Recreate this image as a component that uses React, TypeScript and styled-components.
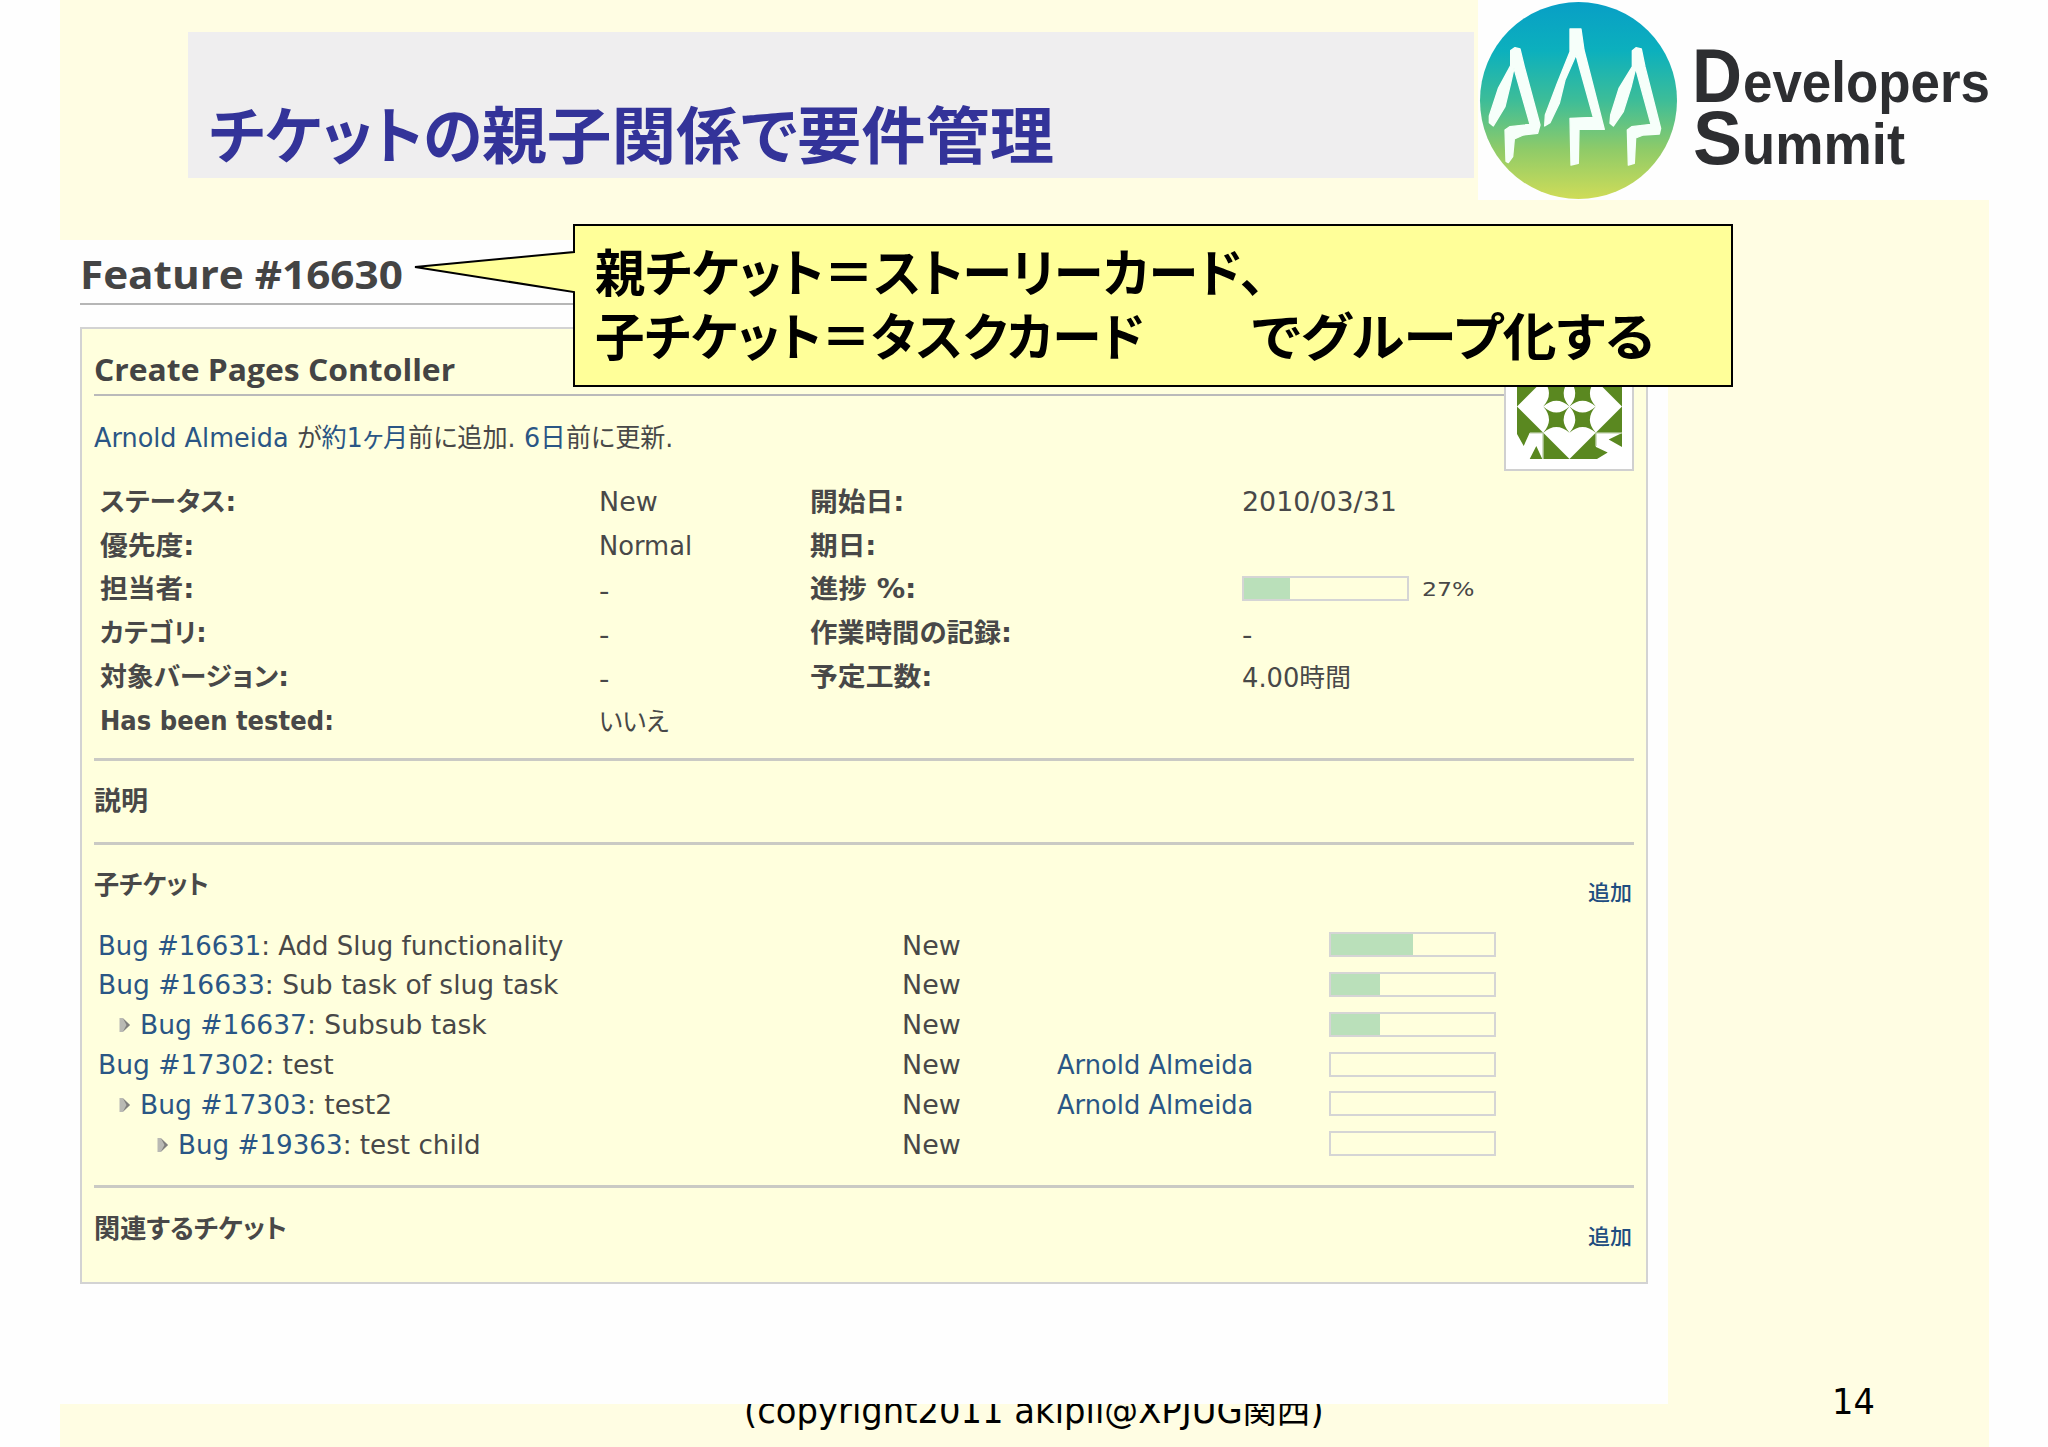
import React, { useLayoutEffect, useRef, useState } from "react";
import styled, { createGlobalStyle } from "styled-components";

const verdana = `"DejaVu Sans", "Noto Sans CJK JP", sans-serif`;
const gothic = `"Noto Sans CJK JP", sans-serif`;
const trebuchet = `"Open Sans", "Noto Sans CJK JP", sans-serif`;

const Global = createGlobalStyle`
  * { box-sizing: border-box; }
  html, body { margin: 0; background: #fefefe; }
  body { font-family: ${verdana}; font-size: 26px; color: #484848; }
`;

/* ---------- text set to a given measure ---------- */

const FitBox = styled.span<{ $w: number }>`
  display: inline-block;
  width: ${(p) => p.$w}px;
  white-space: pre;
  flex: none;
`;
const FitInner = styled.span`
  display: inline-block;
  transform-origin: 0 50%;
  font-feature-settings: "palt";
`;

function Fit({ w, children }: { w: number; children: React.ReactNode }) {
  const ref = useRef<HTMLSpanElement>(null);
  const [scale, setScale] = useState(1);
  useLayoutEffect(() => {
    if (ref.current) setScale(w / ref.current.offsetWidth);
  }, [w]);
  return (
    <FitBox $w={w}>
      <FitInner ref={ref} style={{ transform: `scaleX(${scale})` }}>
        {children}
      </FitInner>
    </FitBox>
  );
}

/* ---------- slide ---------- */

const Page = styled.main`
  position: relative;
  width: 2048px;
  height: 1447px;
  overflow: hidden;
  padding-left: 60px;
  background: #fefefe;
`;
const Slide = styled.div`
  width: 1929px;
  height: 1447px;
  background: #fffde3;
  display: flex;
  flex-direction: column;
`;
const Header = styled.header`
  height: 240px;
  padding: 32px 0 0 128px;
  display: flex;
  flex: none;
`;
const TitleBar = styled.h1`
  margin: 0;
  width: 1286px;
  height: 146px;
  padding: 62px 0 0 21px;
  background: #efeeef;
  color: #333399;
  font: 700 62px/76px ${gothic};
`;
const LogoBox = styled.div`
  position: absolute;
  left: 1478px;
  top: 0;
  width: 570px;
  height: 200px;
  background: #fefefe;
`;
const Middle = styled.div`
  display: flex;
  height: 1164px;
  flex: none;
`;
const Aside = styled.aside`
  flex: 1;
  display: flex;
  align-items: flex-end;
`;
const PageNumber = styled.div`
  margin: 0 0 -18px 164px;
  color: #000;
  font: 36px/40px ${verdana};
`;
const Footer = styled.footer`
  height: 43px;
  overflow: hidden;
  padding-left: 684px;
  color: #000;
`;
const Copyright = styled.div`
  margin-top: -15px;
  font: 35px/44px ${verdana};
`;

/* ---------- issue sheet ---------- */

const Sheet = styled.section`
  width: 1608px;
  background: #fefefe;
  padding: 0 20px;
`;
const IssueHeading = styled.h2`
  margin: 0 0 22px;
  height: 65px;
  padding-top: 4px;
  border-bottom: 2px solid #b6b6b6;
  font: 700 40px/59px ${trebuchet};
  color: #444;
`;
const Issue = styled.article`
  height: 957px;
  border: 2px solid #d3d3d3;
  padding: 0 12px;
  background: #ffffdd;
`;
const IssueTop = styled.div`
  height: 151px;
  padding-top: 12px;
  display: flex;
`;
const IssueSummary = styled.div`
  flex: 1;
`;
const Subject = styled.h3`
  margin: 0;
  height: 55px;
  padding-top: 4px;
  border-bottom: 2px solid #bababa;
  font: 700 30px/49px ${trebuchet};
  color: #444;
`;
const Byline = styled.p`
  margin: 24px 0 0;
  line-height: 36px;
`;
const Link = styled.a`
  color: #2a5685;
`;
const AvatarFrame = styled.div`
  width: 130px;
  height: 130px;
  border: 2px solid #d0d0d0;
  background: #fff;
  display: grid;
  place-items: center;
`;
const Attributes = styled.dl`
  margin: 0;
  padding-left: 6px;
  display: grid;
  grid-template-columns: 499px 211px 432px auto;
  grid-auto-rows: 43.8px;
  align-items: center;
  line-height: 36px;
`;
const Label = styled.dt`
  font-weight: 700;
`;
const Value = styled.dd<{ $drop?: number }>`
  margin: 0;
  padding-top: ${(p) => p.$drop ?? 0}px;
  display: flex;
  align-items: center;
`;
const Percent = styled.span`
  margin-left: 13px;
  font-size: 20px;
`;
const Rule = styled.hr<{ $top: number }>`
  margin: ${(p) => p.$top}px 0 0;
  border: 0;
  height: 3px;
  background: #cacac4;
`;
const SectionTitle = styled.h4<{ $h: number }>`
  margin: 0;
  height: ${(p) => p.$h}px;
  display: flex;
  align-items: center;
  justify-content: space-between;
  font: 700 26px/36px ${verdana};
`;
const AddLink = styled(Link)`
  padding: 15px 2px 0 0;
  font-weight: 500;
  font-size: 21px;
  color: #1f4d80;
`;
const Subtask = styled.div`
  height: 39.8px;
  display: grid;
  grid-template-columns: 808px 155px 272px auto;
  align-items: center;
  line-height: 36px;
`;
const TaskName = styled.div<{ $indent: number }>`
  display: flex;
  align-items: center;
  padding-left: ${(p) => p.$indent}px;
`;
const ArrowIcon = styled.svg`
  width: 12px;
  height: 16px;
  margin-right: 9px;
`;
const Track = styled.div`
  width: 167px;
  height: 25px;
  border: 2px solid #d5d5d5;
  display: flex;
  position: relative;
  top: -1px;
`;
const Fill = styled.div`
  background: #bae0ba;
`;

/* ---------- callout ---------- */

const Callout = styled.div`
  position: absolute;
  left: 413px;
  top: 223px;
  width: 1322px;
  height: 166px;
  padding: 15px 0 0 182px;
  color: #000;
  font: 700 51px/64px ${gothic};
`;
const CalloutShape = styled.svg`
  position: absolute;
  inset: 0;
`;
const CalloutLine = styled.div`
  position: relative;
  height: 64px;
`;

function Progress({ value }: { value: number }) {
  return (
    <Track>
      <Fill style={{ width: `${value}%` }} />
    </Track>
  );
}

function Logo() {
  return (
    <LogoBox>
      <svg width="570" height="200" viewBox="0 0 570 200">
        <defs>
          <linearGradient id="sky" x1="0" y1="0" x2="0" y2="1">
            <stop offset="0" stopColor="#089fc6" />
            <stop offset="0.25" stopColor="#0cb0bd" />
            <stop offset="0.5" stopColor="#3dbd98" />
            <stop offset="0.75" stopColor="#8fcb68" />
            <stop offset="1" stopColor="#cfdc58" />
          </linearGradient>
        </defs>
        <ellipse cx="100.5" cy="100.5" rx="98.5" ry="98.5" fill="url(#sky)" />
        <g
          transform="translate(-8 0) scale(0.33333)"
          fill="#f6fffa"
          stroke="#f6fffa"
          strokeWidth="4"
          strokeLinejoin="round"
        >
          <path d="M122 152 L135 143 L150 147 L163 200 L210 375 L203 400 L160 405 L133 417 L128 470 L115 488 L108 484 L105 390 L120 380 L180 373 L132 205 L122 250 L105 320 L70 378 L58 368 L58 348 L85 265 L122 197Z" />
          <path d="M300 87 L333 87 L342 150 L403 388 L327 388 L325 490 L303 495 L300 355 L370 352 L318 165 L285 240 L268 310 L240 368 L224 378 L226 345 L262 250 L300 155Z" />
          <path d="M487 152 L498 143 L514 147 L525 200 L572 385 L568 402 L520 405 L497 414 L493 490 L475 495 L472 390 L485 380 L543 373 L497 205 L483 262 L460 335 L430 378 L420 370 L422 345 L447 265 L487 200Z" />
        </g>
        <g fill="#2d2e31" fontFamily="Liberation Sans, sans-serif" fontWeight="700">
          <text x="214" y="102" fontSize="76" textLength="50" lengthAdjust="spacingAndGlyphs">D</text>
          <text x="265" y="102" fontSize="58" textLength="247" lengthAdjust="spacingAndGlyphs">evelopers</text>
          <text x="215" y="164" fontSize="76" textLength="49" lengthAdjust="spacingAndGlyphs">S</text>
          <text x="264" y="164" fontSize="58" textLength="163" lengthAdjust="spacingAndGlyphs">ummit</text>
        </g>
      </svg>
    </LogoBox>
  );
}

function Avatar() {
  const star = "M0 0 Q13.1 12 26.25 0 Q14.5 13.1 26.25 26.25 Q13.1 14.5 0 26.25 Q11.5 13.1 0 0Z";
  return (
    <AvatarFrame>
      <svg width="105" height="105" viewBox="0 0 105 105" fill="#5a8820">
        {[26.25, 52.5].map((x) =>
          [26.25, 52.5].map((y) => <path key={`${x}-${y}`} d={star} transform={`translate(${x} ${y})`} />)
        )}
        <path d="M0 26.25 H26.25 L0 52.5Z M0 52.5 L26.25 78.75 H0Z M105 26.25 H78.75 L105 52.5Z M105 52.5 L78.75 78.75 H105Z" />
        <path d="M26.25 78.75 V105 H52.5Z M78.75 78.75 V105 H52.5Z M26.25 26.25 V0 H52.5Z M78.75 26.25 V0 H52.5Z" />
        <path d="M0 78 H13 L6.7 92 L0 80Z M12.7 105 L19.3 92 L25.3 105Z M105 79 V93 L91.7 85.5Z M78 92.5 L90.7 98.5 L80 105 H78Z" />
        <path d="M13 79 H26 V105 M79 92 V79 H105" fill="none" stroke="#b5caa0" strokeWidth="1.2" />
      </svg>
    </AvatarFrame>
  );
}

function Arrow() {
  return (
    <ArrowIcon viewBox="0 0 12 16">
      <path d="M0.5 1 L4 1 L11 8 L4 15 L0.5 15Z" fill="#b9b9b4" />
      <path d="M4 1.5 L11 8 L4 14.5 L7.5 8Z" fill="#807f7c" />
    </ArrowIcon>
  );
}

type Cell = { text: string; w: number; drop?: number } | null;
const none: Cell = { text: "-", w: 10, drop: 3 };
const attributes: [Cell, Cell | "progress", Cell, Cell | "progress"][] = [
  [{ text: "ステータス:", w: 136 }, { text: "New", w: 59 }, { text: "開始日:", w: 94 }, { text: "2010/03/31", w: 155 }],
  [{ text: "優先度:", w: 94 }, { text: "Normal", w: 93 }, { text: "期日:", w: 66 }, null],
  [{ text: "担当者:", w: 94 }, none, { text: "進捗 %:", w: 107 }, "progress"],
  [{ text: "カテゴリ:", w: 107 }, none, { text: "作業時間の記録:", w: 202 }, none],
  [{ text: "対象バージョン:", w: 189 }, none, { text: "予定工数:", w: 122 }, { text: "4.00時間", w: 109, drop: 2 }],
  [{ text: "Has been tested:", w: 234 }, { text: "いいえ", w: 70, drop: 3 }, null, null],
];

const subtasks = [
  { indent: 0, id: "Bug #16631", title: "Add Slug functionality", w: 465, done: 50 },
  { indent: 0, id: "Bug #16633", title: "Sub task of slug task", w: 460, done: 30 },
  { indent: 1, id: "Bug #16637", title: "Subsub task", w: 347, done: 30 },
  { indent: 0, id: "Bug #17302", title: "test", w: 236, who: true, done: 0 },
  { indent: 1, id: "Bug #17303", title: "test2", w: 252, who: true, done: 0 },
  { indent: 2, id: "Bug #19363", title: "test child", w: 303, done: 0 },
];

function AttributeValue({ cell }: { cell: Cell | "progress" }) {
  if (cell === "progress")
    return (
      <Value>
        <Progress value={28} />
        <Percent>
          <Fit w={52}>27%</Fit>
        </Percent>
      </Value>
    );
  return <Value $drop={cell?.drop}>{cell && <Fit w={cell.w}>{cell.text}</Fit>}</Value>;
}

export default function App() {
  return (
    <Page>
      <Global />
      <Slide>
        <Header>
          <TitleBar>
            <Fit w={273}>チケットの</Fit>
            <Fit w={259}>親子関係</Fit>
            <Fit w={56}>で</Fit>
            <Fit w={257}>要件管理</Fit>
          </TitleBar>
        </Header>
        <Middle>
          <Sheet>
            <IssueHeading>
              <Fit w={323}>Feature #16630</Fit>
            </IssueHeading>
            <Issue>
              <IssueTop>
                <IssueSummary>
                  <Subject>
                    <Fit w={361}>Create Pages Contoller</Fit>
                  </Subject>
                  <Byline>
                    <Fit w={203}>
                      <Link>Arnold Almeida</Link>{" "}
                    </Fit>
                    <Fit w={111}>
                      が<Link>約1ヶ月</Link>
                    </Fit>
                    <Fit w={116}>前に追加. </Fit>
                    <Fit w={42}>
                      <Link>6日</Link>
                    </Fit>
                    <Fit w={107}>前に更新.</Fit>
                  </Byline>
                </IssueSummary>
                <Avatar />
              </IssueTop>
              <Attributes>
                {attributes.map(([l1, v1, l2, v2], i) => (
                  <React.Fragment key={i}>
                    <Label>{l1 && <Fit w={l1.w}>{l1.text}</Fit>}</Label>
                    <AttributeValue cell={v1} />
                    <Label>{l2 && <Fit w={l2.w}>{l2.text}</Fit>}</Label>
                    <AttributeValue cell={v2} />
                  </React.Fragment>
                ))}
              </Attributes>
              <Rule $top={15} />
              <SectionTitle $h={81}>
                <Fit w={54}>説明</Fit>
              </SectionTitle>
              <Rule $top={0} />
              <SectionTitle $h={81}>
                <Fit w={115}>子チケット</Fit>
                <AddLink>
                  <Fit w={44}>追加</Fit>
                </AddLink>
              </SectionTitle>
              {subtasks.map((t) => (
                <Subtask key={t.id}>
                  <TaskName $indent={t.indent ? 25 + (t.indent - 1) * 38 : 4}>
                    {t.indent > 0 && <Arrow />}
                    <Fit w={t.w}>
                      <Link>{t.id}</Link>: {t.title}
                    </Fit>
                  </TaskName>
                  <Fit w={59}>New</Fit>
                  <Link>{t.who && <Fit w={196}>Arnold Almeida</Fit>}</Link>
                  <Progress value={t.done} />
                </Subtask>
              ))}
              <Rule $top={20} />
              <SectionTitle $h={83}>
                <Fit w={193}>関連するチケット</Fit>
                <AddLink>
                  <Fit w={44}>追加</Fit>
                </AddLink>
              </SectionTitle>
            </Issue>
          </Sheet>
          <Aside>
            <PageNumber>
              <Fit w={43}>14</Fit>
            </PageNumber>
          </Aside>
        </Middle>
        <Footer>
          <Copyright>
            <Fit w={580}>(copyright2011 akipii@XPJUG関西)</Fit>
          </Copyright>
        </Footer>
      </Slide>
      <Logo />
      <Callout>
        <CalloutShape width="1322" height="166" viewBox="413 223 1322 166">
          <path
            d="M574 225 H1732 V386 H574 V292 L415 267 L574 252Z"
            fill="#ffff99"
            stroke="#000"
            strokeWidth="2"
            strokeLinejoin="miter"
          />
        </CalloutShape>
        <CalloutLine>
          <Fit w={670}>親チケット＝ストーリーカード、</Fit>
        </CalloutLine>
        <CalloutLine>
          <Fit w={550}>子チケット＝タスクカード</Fit>
          <Fit w={107}>　　</Fit>
          <Fit w={402}>でグループ化する</Fit>
        </CalloutLine>
      </Callout>
    </Page>
  );
}
